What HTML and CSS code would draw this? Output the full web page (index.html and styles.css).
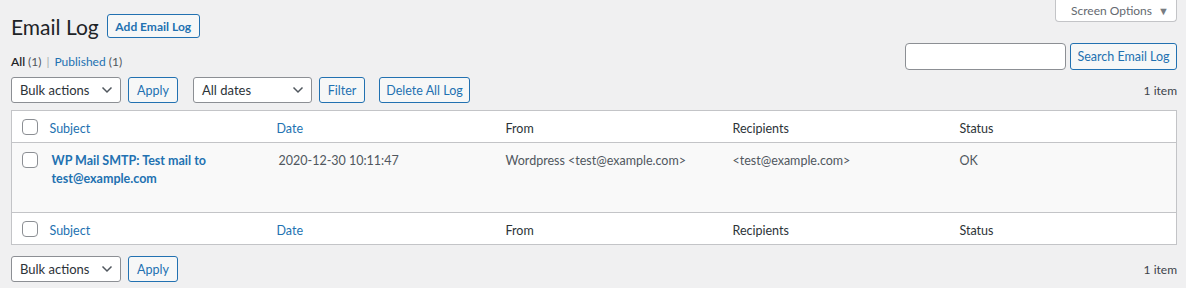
FILE: index.html
```html
<!DOCTYPE html>
<html>
<head>
  <meta charset="UTF-8">
  <title>Email Log</title>
  <link rel="stylesheet" href="styles.css">
</head>
<body>
<div class="wrap">
  <div class="top-row">
    <div class="heading">
      <h1>Email Log</h1>
      <a class="btn title-action" href="#">Add Email Log</a>
    </div>
    <button class="screen-options">Screen Options <span class="arrow">&#9660;</span></button>
  </div>

  <div class="filter-row">
    <ul class="subsubsub">
      <li class="current">All <span class="count">(1)</span></li>
      <li class="sep">|</li>
      <li><a href="#">Published <span class="count">(1)</span></a></li>
    </ul>
    <div class="search-box">
      <input class="search-input" type="search">
      <a class="btn" href="#">Search Email Log</a>
    </div>
  </div>

  <div class="tablenav">
    <div class="actions">
      <div class="select bulk">Bulk actions
        <svg width="12" height="8" viewBox="0 0 12 8"><path d="M1.5 1.5 6 6l4.5-4.5" fill="none" stroke="#50575e" stroke-width="1.5"/></svg>
      </div>
      <a class="btn" href="#">Apply</a>
    </div>
    <div class="actions">
      <div class="select dates">All dates
        <svg width="12" height="8" viewBox="0 0 12 8"><path d="M1.5 1.5 6 6l4.5-4.5" fill="none" stroke="#50575e" stroke-width="1.5"/></svg>
      </div>
      <a class="btn" href="#">Filter</a>
    </div>
    <a class="btn" href="#">Delete All Log</a>
    <span class="num-items">1 item</span>
  </div>

  <table class="list-table">
    <colgroup>
      <col class="col-check">
      <col><col><col><col><col>
    </colgroup>
    <thead>
      <tr>
        <th class="check"><span class="checkbox"></span></th>
        <th class="sortable"><a href="#">Subject</a></th>
        <th class="sortable"><a href="#">Date</a></th>
        <th>From</th>
        <th>Recipients</th>
        <th>Status</th>
      </tr>
    </thead>
    <tbody>
      <tr>
        <td class="check"><span class="checkbox"></span></td>
        <td><a class="row-title" href="#">WP Mail SMTP: Test mail to test@example.com</a></td>
        <td>2020-12-30 10:11:47</td>
        <td>Wordpress &lt;test@example.com&gt;</td>
        <td>&lt;test@example.com&gt;</td>
        <td>OK</td>
      </tr>
    </tbody>
    <tfoot>
      <tr>
        <th class="check"><span class="checkbox"></span></th>
        <th class="sortable"><a href="#">Subject</a></th>
        <th class="sortable"><a href="#">Date</a></th>
        <th>From</th>
        <th>Recipients</th>
        <th>Status</th>
      </tr>
    </tfoot>
  </table>

  <div class="tablenav bottom">
    <div class="actions">
      <div class="select bulk">Bulk actions
        <svg width="12" height="8" viewBox="0 0 12 8"><path d="M1.5 1.5 6 6l4.5-4.5" fill="none" stroke="#50575e" stroke-width="1.5"/></svg>
      </div>
      <a class="btn" href="#">Apply</a>
    </div>
    <span class="num-items">1 item</span>
  </div>
</div>
</body>
</html>
```

FILE: styles.css
```css
* {
  box-sizing: border-box;
}

body {
  margin: 0;
  background: #f0f0f1;
  font-family: Lato, "Open Sans", sans-serif;
  font-size: 12.5px;
  color: #3c434a;
}

a {
  color: #2271b1;
  text-decoration: none;
}

.wrap {
  padding: 0 9px 0 11px;
}

/* heading + screen options */
.top-row {
  display: flex;
  justify-content: space-between;
  align-items: flex-start;
}

.heading {
  display: flex;
  align-items: center;
  gap: 8px;
  padding-top: 14px;
}

h1 {
  margin: 0;
  font-size: 21px;
  font-weight: 400;
  color: #1d2327;
  line-height: 24px;
  position: relative;
  top: 1px;
}

.btn {
  display: inline-flex;
  align-items: center;
  height: 26px;
  padding: 0 8px;
  border: 1px solid #2271b1;
  border-radius: 3px;
  background: #f6f7f7;
  color: #2271b1;
  font-size: 12.5px;
  white-space: nowrap;
}

.title-action {
  height: 24px;
  width: 93px;
  justify-content: center;
  padding: 0;
  font-size: 12px;
  font-weight: 700;
}

.screen-options {
  width: 122px;
  height: 23px;
  margin-top: -1px;
  padding: 0 0 0 15px;
  display: flex;
  align-items: center;
  gap: 6px;
  background: #fff;
  border: 1px solid #c3c4c7;
  border-top: none;
  border-radius: 0 0 4px 4px;
  font-family: inherit;
  font-size: 12px;
  color: #646970;
}

.screen-options .arrow {
  font-size: 11px;
  color: #787c82;
}

/* views + search */
.filter-row {
  display: flex;
  justify-content: space-between;
  align-items: center;
  margin-top: 5px;
}

.subsubsub {
  list-style: none;
  margin: 10px 0 0;
  padding: 0;
  display: flex;
  gap: 5px;
  font-size: 12px;
}

.subsubsub .current {
  color: #1d2327;
  font-weight: 600;
}

.subsubsub .count {
  color: #50575e;
  font-weight: 400;
}

.subsubsub .sep {
  color: #a7aaad;
}

.subsubsub a .count {
  color: #50575e;
}

.search-box {
  display: flex;
  gap: 4px;
}

.search-input {
  width: 161px;
  height: 27px;
  border: 1px solid #8c8f94;
  border-radius: 4px;
  background: #fff;
}

.search-box .btn {
  height: 27px;
  width: 107px;
  justify-content: center;
}

/* table nav */
.tablenav {
  display: flex;
  align-items: center;
  height: 26px;
  margin: 7px 0 7px;
}

.tablenav.bottom {
  margin-top: 11px;
}

.actions {
  display: flex;
  gap: 7px;
  margin-right: 15px;
}

.actions + .actions {
  margin-right: 14px;
}

.actions .btn,
.tablenav > .btn {
  justify-content: center;
  padding: 0;
}

.actions .btn {
  width: 50px;
}

.actions .select.dates + .btn {
  width: 46px;
}

.tablenav > .btn {
  width: 91px;
}

.select {
  display: flex;
  justify-content: space-between;
  align-items: center;
  height: 26px;
  padding: 0 7px 0 8px;
  border: 1px solid #8c8f94;
  border-radius: 3px;
  background: #fff;
  color: #2c3338;
  font-size: 13px;
}

.select.bulk {
  width: 110px;
}

.select.dates {
  width: 119px;
}

.num-items {
  margin-left: auto;
  font-size: 12px;
  color: #3c434a;
}

/* list table */
.list-table {
  width: 100%;
  table-layout: fixed;
  border-collapse: collapse;
  border: 1px solid #c3c4c7;
  background: #fff;
}

.col-check {
  width: 30px;
}

.list-table th {
  height: 32px;
  padding: 3px 10px 0;
  text-align: left;
  font-weight: 400;
  font-size: 12.5px;
  color: #2c3338;
}

.list-table th.sortable {
  padding: 3px 8px 0;
}

.list-table thead tr {
  border-bottom: 1px solid #c3c4c7;
}

.list-table tfoot tr {
  border-top: 1px solid #c3c4c7;
}

.list-table th.check,
.list-table td.check {
  padding: 0 0 0 10px;
}

.list-table td.check {
  padding-top: 9px;
}

.list-table tbody tr {
  background: #f9f9f9;
  height: 70px;
}

.list-table td {
  vertical-align: top;
  padding: 9px 10px 8px;
  line-height: 18px;
  color: #50575e;
  font-size: 12.5px;
}

.row-title {
  font-weight: 700;
  font-size: 12.5px;
}

.checkbox {
  display: block;
  width: 16px;
  height: 16px;
  border: 1px solid #8c8f94;
  border-radius: 4px;
  background: #fff;
}
```
